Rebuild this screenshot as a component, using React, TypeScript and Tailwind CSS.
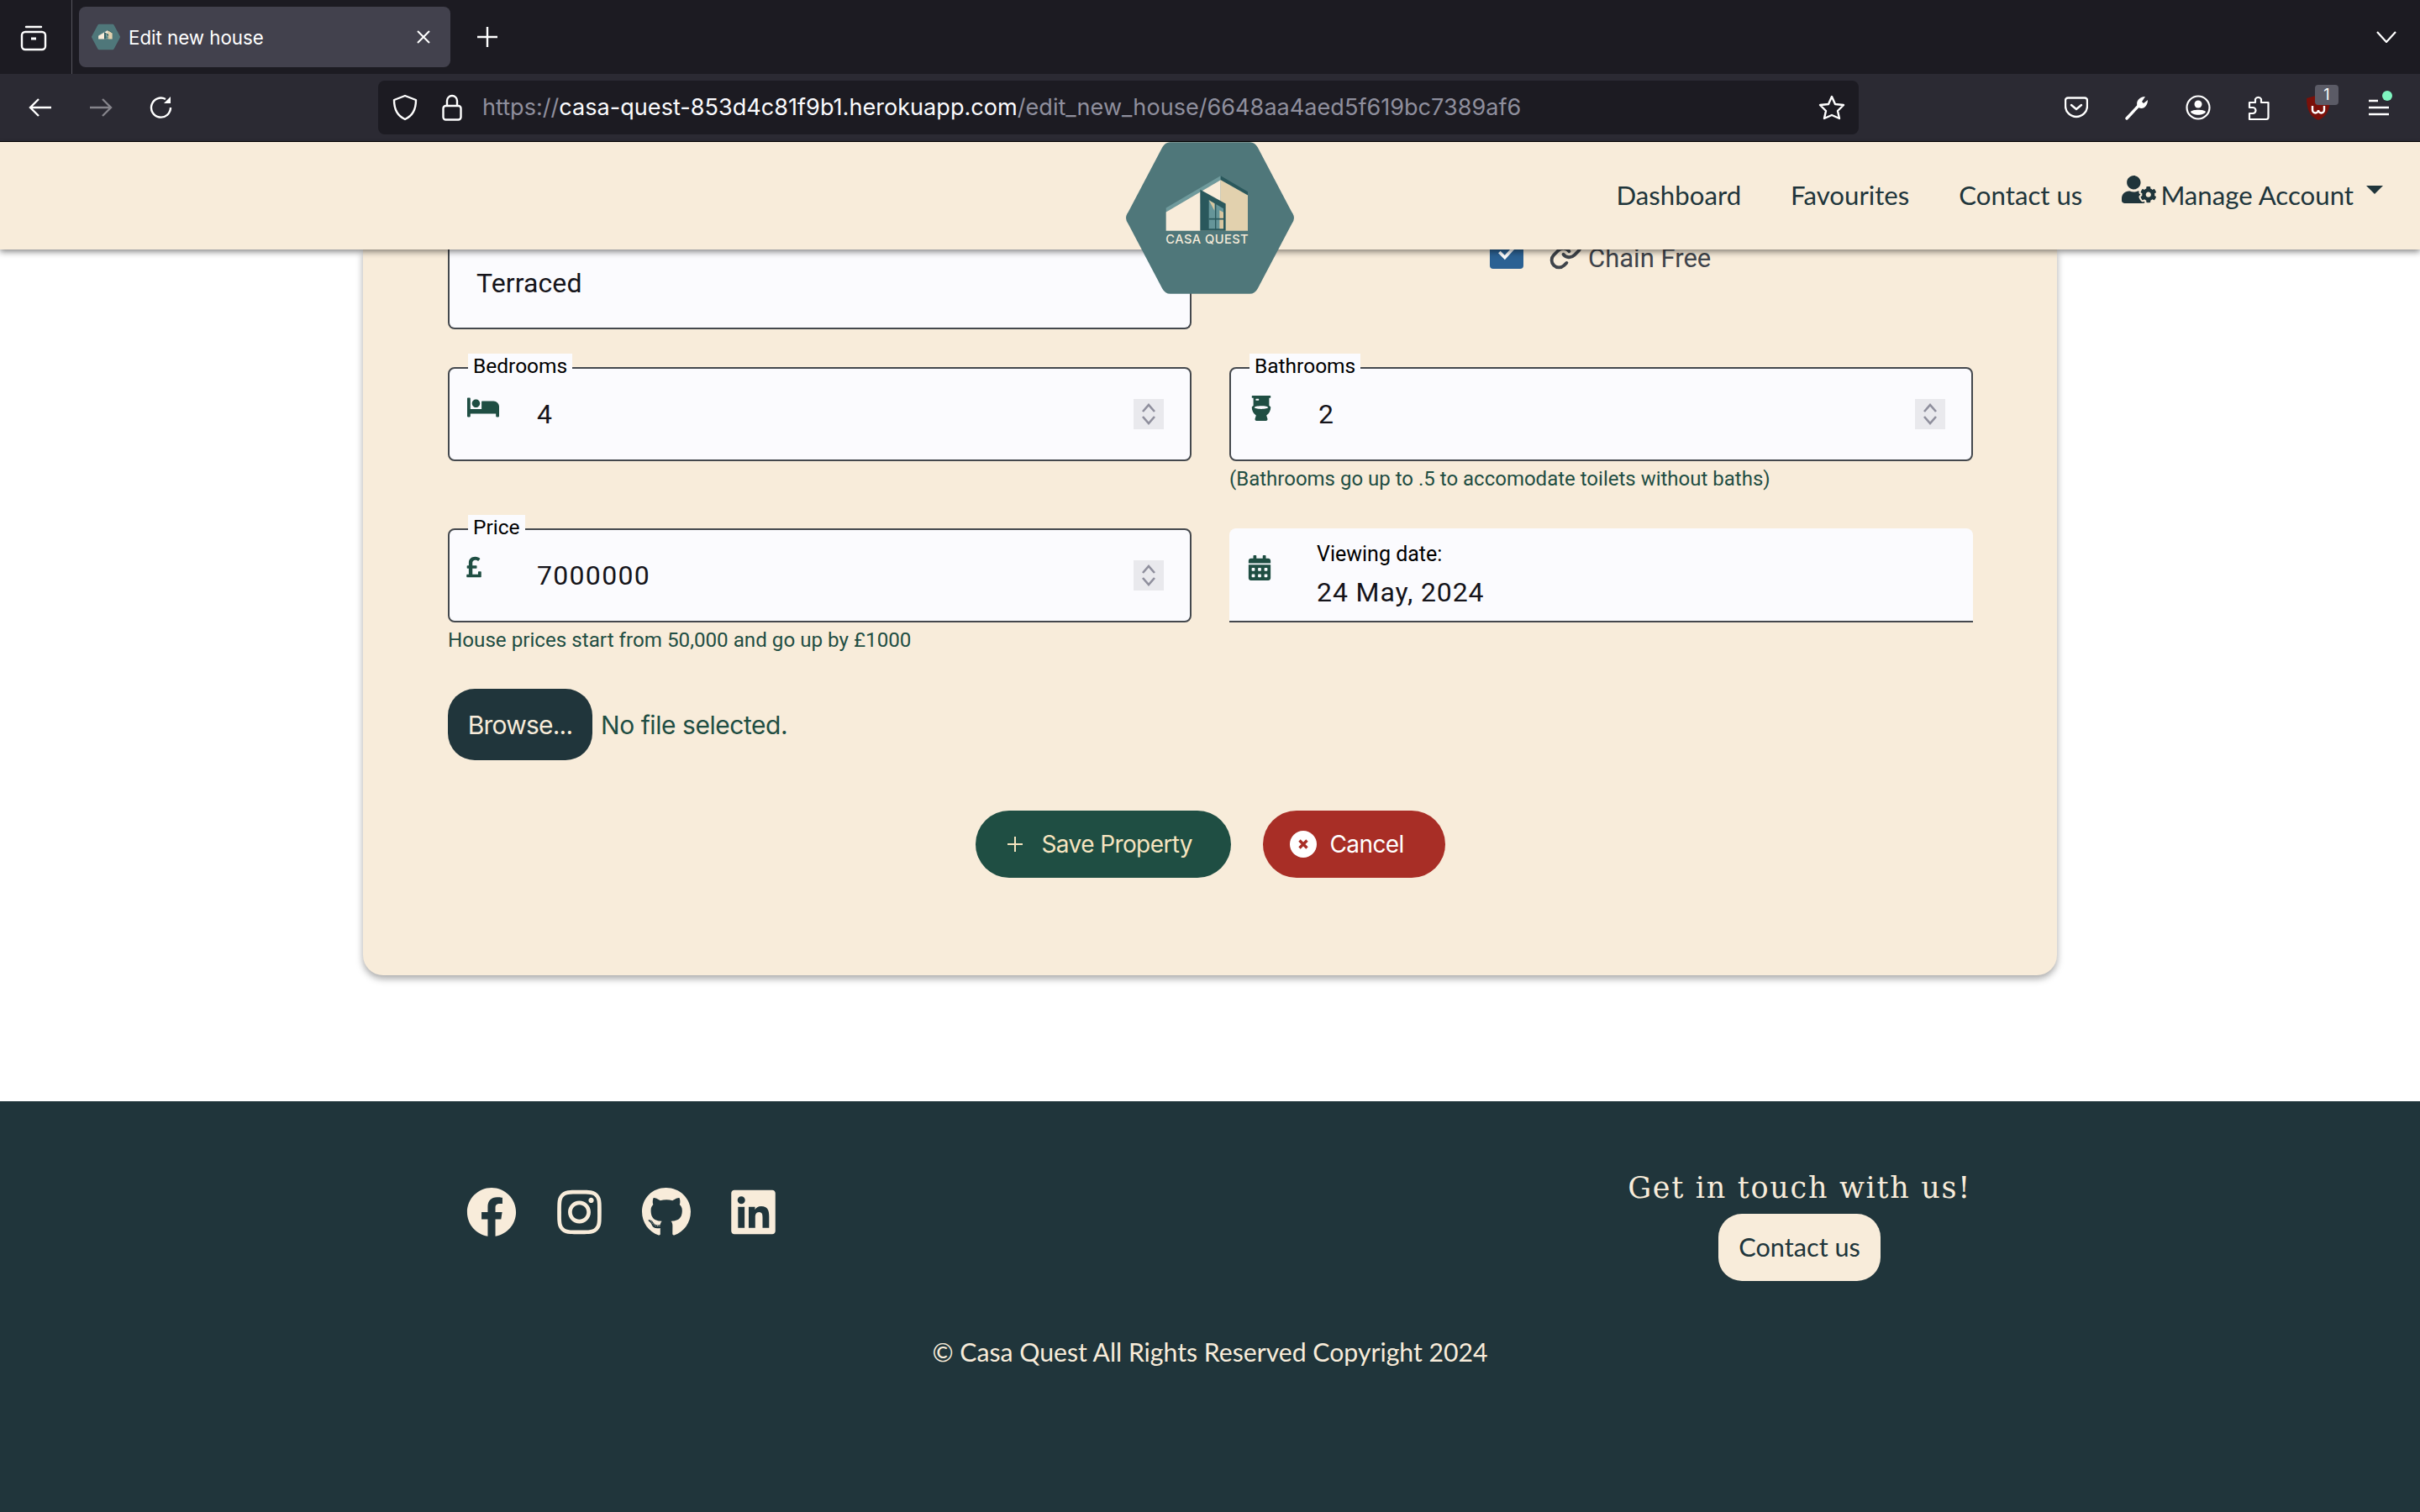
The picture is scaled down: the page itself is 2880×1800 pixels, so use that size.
import { FaBed, FaCalendarAlt, FaFacebook, FaGithub, FaInstagram, FaLinkedin, FaPoundSign, FaToilet, FaUserCog } from "react-icons/fa";
import { Link } from "lucide-react";

function HexLogo({ withText = true, className = "" }: { withText?: boolean; className?: string }) {
    return (
        <svg viewBox="180 55 600 542" className={className}>
            <path d="M338 55 L622 55 Q640 55 650 73 L772 305 Q788 326 772 347 L650 579 Q640 597 622 597 L338 597 Q320 597 310 579 L188 347 Q172 326 188 305 L310 73 Q320 55 338 55 Z" fill="#4f777a" />
            <polygon points="323,290 518,175 518,190 323,305" fill="#6f9a9c" />
            <polygon points="518,175 615,232 615,245 518,190" fill="#2a585c" />
            <polygon points="323,305 518,190 518,372 323,372" fill="#f8ecda" />
            <polygon points="518,190 615,245 615,372 518,372" fill="#e2d1ae" />
            <polygon points="445,225 536,275 536,372 445,372" fill="#2a585c" />
            <polygon points="476,262 528,292 528,364 476,364" fill="#659599" />
            <polygon points="476,262 496,274 496,300" fill="#d9c69f" />
            <polygon points="514,298 528,306 528,364 514,364" fill="#d9c69f" />
            <rect x="498" y="270" width="4" height="100" fill="#2a585c" />
            <rect x="476" y="327" width="54" height="5" fill="#2a585c" />
            {withText && (
                <text x="322" y="418" fontSize="44" fontWeight="500" textLength="295" fill="#f3ead9" fontFamily="Inter, sans-serif">CASA QUEST</text>
            )}
        </svg>
    );
}

function Spinner() {
    return (
        <div className="w-[36px] h-[36px] bg-[#e9e9ed] ml-auto mr-[31px] shrink-0">
            <svg viewBox="0 0 36 36" className="w-full h-full" fill="none" stroke="#8f8f9d" strokeWidth="2.6">
                <path d="M11 15 L18 7 L25 15" />
                <path d="M11 21 L18 29 L25 21" />
            </svg>
        </div>
    );
}

function NumberField({ label, value, icon }: { label: string; value: string; icon: React.ReactNode }) {
    return (
        <div className="relative h-[112px] -mt-[1px] bg-[#fbfbfe] border-2 border-[#44484d] rounded-lg flex items-center">
            <span className="absolute left-[22px] top-[-18px] bg-[#fbfbfe] px-[6px] text-[24.5px] leading-[30px] text-black">{label}</span>
            <div className="w-[104px] h-full pl-[21px] pt-[32px] shrink-0 text-[#1f4e43]">{icon}</div>
            <span className="text-[32px] leading-[40px] tracking-[1.3px] text-[#15141a]">{value}</span>
            <Spinner />
        </div>
    );
}

function TabStrip() {
    return (
        <div className="h-[88px] bg-[#1c1b22] flex items-center font-['Inter',sans-serif]">
            <svg viewBox="0 0 32 32" className="w-[32px] h-[32px] ml-[24px] mt-[2px]" fill="none" stroke="white" strokeWidth="2.4">
                <rect x="2" y="9" width="28" height="21" rx="4" />
                <path d="M7 3 H25" strokeLinecap="round" />
                <path d="M13 17 H19" strokeWidth="3" />
            </svg>
            <div className="w-[1px] h-[88px] bg-[#55545c] ml-[29px]" />
            <div className="w-[442px] h-[72px] bg-[#42414d] rounded-lg ml-[8px] flex items-center">
                <HexLogo withText={false} className="w-[34px] h-[34px] ml-[15px]" />
                <span className="text-white text-[22.3px] ml-[10px] mt-[2px]">Edit new house</span>
                <svg viewBox="0 0 18 18" className="w-[18px] h-[18px] ml-auto mr-[23px]" stroke="white" strokeWidth="2">
                    <path d="M2 2 L16 16 M16 2 L2 16" />
                </svg>
            </div>
            <svg viewBox="0 0 26 26" className="w-[26px] h-[26px] ml-[31px]" stroke="white" strokeWidth="2.4">
                <path d="M13 1 V25 M1 13 H25" />
            </svg>
            <svg viewBox="0 0 24 14" className="w-[24px] h-[14px] ml-auto mr-[28px]" fill="none" stroke="white" strokeWidth="2.2">
                <path d="M1 1 L12 13 L23 1" />
            </svg>
        </div>
    );
}

function Toolbar() {
    return (
        <div className="h-[81px] pb-[1px] bg-[#2b2a33] border-b border-black flex items-center font-['Inter',sans-serif]">
            <svg viewBox="0 0 28 24" className="w-[28px] h-[24px] ml-[34px]" fill="none" stroke="white" strokeWidth="2.4">
                <path d="M27 12 H2 M12 2 L2 12 L12 22" />
            </svg>
            <svg viewBox="0 0 28 24" className="w-[28px] h-[24px] ml-[44px]" fill="none" stroke="#85848b" strokeWidth="2.4">
                <path d="M1 12 H26 M16 2 L26 12 L16 22" />
            </svg>
            <svg viewBox="0 0 28 28" className="w-[28px] h-[28px] ml-[44px]" fill="none" stroke="white" strokeWidth="2.4">
                <path d="M25 14 A11.5 11.5 0 1 1 19 4" />
                <path d="M25 1 V9 H17" fill="white" stroke="none" />
            </svg>
            <div className="w-[1762px] h-[64px] bg-[#1c1b22] rounded-lg ml-[244px] flex items-center">
                <svg viewBox="0 0 30 32" className="w-[30px] h-[32px] ml-[17px]" fill="none" stroke="white" strokeWidth="2.4" strokeLinejoin="round">
                    <path d="M15 2 L28 7 C28 18 24 26 15 30 C6 26 2 18 2 7 Z" />
                </svg>
                <svg viewBox="0 0 24 32" className="w-[24px] h-[32px] ml-[29px]" fill="none" stroke="white" strokeWidth="2.4">
                    <rect x="1.5" y="14" width="21" height="16.5" rx="3" />
                    <path d="M6 14 V8 A6 6 0 0 1 18 8 V14" />
                </svg>
                <span className="ml-[24px] mt-[2px] text-[27.1px] text-[#fbfbfe] whitespace-nowrap">
                    <span className="text-[#8f8f9d]">https://</span>casa-quest-853d4c81f9b1.herokuapp.com<span className="text-[#8f8f9d]">/edit_new_house/6648aa4aed5f619bc7389af6</span>
                </span>
                <svg viewBox="0 0 32 30" className="w-[32px] h-[30px] ml-auto mr-[16px]" fill="none" stroke="white" strokeWidth="2.4" strokeLinejoin="round">
                    <path d="M16 2 L20 11 L30 12 L23 19 L25 28 L16 24 L7 28 L9 19 L2 12 L12 11 Z" />
                </svg>
            </div>
            <svg viewBox="0 0 28 26" className="w-[28px] h-[26px] ml-[245px]" fill="none" stroke="white" strokeWidth="2.4" strokeLinejoin="round">
                <path d="M4 1.5 H24 A3 3 0 0 1 27 4.5 V11 A13 13 0 0 1 1 11 V4.5 A3 3 0 0 1 4 1.5 Z" />
                <path d="M8 10 L14 15 L20 10" strokeLinecap="round" />
            </svg>
            <svg viewBox="0 0 28 30" className="w-[28px] h-[30px] ml-[44px]" fill="none" stroke="white" strokeWidth="3.4" strokeLinecap="round">
                <path d="M2 28 L16 13" />
                <path d="M15 14 C12 8 17 2 24 2 L20 8 L22 10 L27 6 C27 13 22 18 16 15" fill="white" stroke="none" />
            </svg>
            <svg viewBox="0 0 30 30" className="w-[30px] h-[30px] ml-[44px]" fill="none" stroke="white" strokeWidth="2.2">
                <circle cx="15" cy="15" r="13.5" />
                <circle cx="15" cy="11" r="4.5" fill="white" stroke="none" />
                <path d="M6 20 C8 17 22 17 24 20 C22 25 8 25 6 20 Z" fill="white" stroke="none" />
            </svg>
            <svg viewBox="0 0 26 32" className="w-[26px] h-[32px] ml-[44px]" fill="none" stroke="white" strokeWidth="2.2" strokeLinejoin="round">
                <path d="M2 30 H22 A2.5 2.5 0 0 0 24.5 27.5 V10 H16 V6 A4 4 0 0 0 9 6 V10 H2 V16 H6 A3 3 0 0 1 6 23 H2 Z" />
            </svg>
            <div className="relative w-[28px] h-[32px] ml-[44px]">
                <svg viewBox="0 0 28 32" className="w-full h-full">
                    <path d="M14 1 L28 5 C28 18 24 27 14 31 C4 27 0 18 0 5 Z" fill="#7a1009" />
                    <path d="M7 14 V19 A2.5 2.5 0 0 0 14 19 A2.5 2.5 0 0 0 21 19 V14" fill="none" stroke="white" strokeWidth="2.4" />
                </svg>
                <span className="absolute left-[10px] top-[-11px] w-[28px] h-[24px] rounded bg-[#5b5b66] text-white text-[18px] leading-[24px] text-center">1</span>
            </div>
            <div className="relative w-[24px] h-[20px] ml-[46px]">
                <svg viewBox="0 0 24 20" className="w-full h-full" stroke="white" strokeWidth="2.4">
                    <path d="M0 2 H11 M0 10 H24 M0 18 H24" />
                </svg>
                <span className="absolute left-[16px] top-[-10px] w-[12px] h-[12px] rounded-full bg-[#7ff5c0]" />
            </div>
        </div>
    );
}

function SiteHeader() {
    return (
        <header className="relative z-10 h-[128px] bg-[#f8ecda] shadow-[0_3px_7px_rgba(0,0,0,0.45)] pb-[2px] flex items-center justify-end text-[#20353b] text-[31.2px] font-['Lato',sans-serif]">
            <HexLogo className="absolute left-[1340px] top-0 w-[200px] h-[181px]" />
            <a>Dashboard</a>
            <a className="ml-[59px]">Favourites</a>
            <a className="ml-[59px]">Contact us</a>
            <FaUserCog className="text-[41px] ml-[47px] mb-[14px]" />
            <a className="ml-[5px]">Manage Account</a>
            <span className="ml-[15px] mr-[44px] mb-[12px] w-0 h-0 border-x-[10px] border-x-transparent border-t-[10px] border-t-[#20353b]" />
        </header>
    );
}

function EditForm() {
    return (
        <div className="w-[2016px] ml-[432px] bg-[#f8ecda] rounded-b-3xl shadow-[0_4px_8px_rgba(0,0,0,0.35)] pl-[101px] pr-[101px] pb-[116px] font-['Roboto',sans-serif]">
            <div className="grid grid-cols-[885px_885px] gap-x-[45px] grid-rows-[141px_192px_190px]">
                <div className="h-[95px] bg-[#fbfbfe] border-x-2 border-b-2 border-[#44484d] rounded-b-lg pl-[32px] pt-[20px] text-[32px] leading-[40px] tracking-[0.1px] text-[#15141a]">
                    Terraced
                </div>
                <div className="flex items-start pl-[310px] text-[#3f444b]">
                    <div className="w-[40px] h-[40px] mt-[-17px] rounded bg-[#2b6193] flex items-center justify-center shrink-0">
                        <svg viewBox="0 0 24 24" className="w-[26px] h-[26px]" fill="none" stroke="white" strokeWidth="3.4">
                            <path d="M4 12 L10 18 L21 6" />
                        </svg>
                    </div>
                    <Link size={42} strokeWidth={2.2} className="ml-[30px] mt-[-17px] shrink-0" />
                    <span className="ml-[5px] mt-[-9px] text-[31px] leading-[40px]">Chain Free</span>
                </div>
                <NumberField label="Bedrooms" value="4" icon={<FaBed className="text-[38px] -mt-[5px]" />} />
                <div>
                    <NumberField label="Bathrooms" value="2" icon={<FaToilet className="text-[30px]" />} />
                    <p className="text-[24px] leading-[28px] mt-[7px] text-[#1f4e43]">(Bathrooms go up to .5 to accomodate toilets without baths)</p>
                </div>
                <div>
                    <NumberField label="Price" value="7000000" icon={<FaPoundSign className="text-[28px] -ml-[6px] -mt-[2px]" />} />
                    <p className="text-[24.2px] leading-[28px] mt-[7px] text-[#1f4e43]">House prices start from 50,000 and go up by £1000</p>
                </div>
                <div className="h-[112px] -mt-[1px] bg-[#fbfbfe] rounded-t-lg border-b-2 border-[#44484d] flex">
                    <div className="w-[104px] pl-[21px] pt-[32px] text-[#1f4e43] shrink-0">
                        <FaCalendarAlt className="text-[30px]" />
                    </div>
                    <div className="pt-[16px]">
                        <p className="text-[25px] leading-[30px] text-black">Viewing date:</p>
                        <p className="text-[32px] leading-[40px] mt-[10px] tracking-[0.9px] text-[#15141a]">24 May, 2024</p>
                    </div>
                </div>
            </div>
            <div className="flex items-center font-['Inter',sans-serif] text-[30px]">
                <button className="w-[172px] h-[85px] pt-[2px] rounded-[32px] bg-[#20353b] text-[#f8ecda] tracking-[-0.8px]">Browse...</button>
                <span className="ml-[10px] pt-[2px] text-[#1f4e43] tracking-[-0.45px]">No file selected.</span>
            </div>
            <div className="mt-[60px] flex justify-center font-['Inter',sans-serif] text-[28px] tracking-[-0.6px]">
                <button className="w-[304px] h-[80px] rounded-full bg-[#1f4e43] text-[#f6e4bf] flex items-center pl-[38px]">
                    <svg viewBox="0 0 18 18" className="w-[18px] h-[18px]" stroke="#f6e4bf" strokeWidth="2">
                        <path d="M9 0 V18 M0 9 H18" />
                    </svg>
                    <span className="ml-[23px]">Save Property</span>
                </button>
                <button className="w-[217px] h-[80px] ml-[38px] rounded-full bg-[#a82e26] text-white flex items-center pl-[32px]">
                    <svg viewBox="0 0 32 32" className="w-[32px] h-[32px]">
                        <circle cx="16" cy="16" r="16" fill="white" />
                        <path d="M11.5 11.5 L20.5 20.5 M20.5 11.5 L11.5 20.5" stroke="#a82e26" strokeWidth="3.4" />
                    </svg>
                    <span className="ml-[16px]">Cancel</span>
                </button>
            </div>
        </div>
    );
}

function SiteFooter() {
    return (
        <footer className="mt-[150px] h-[489px] bg-[#20353b] pt-[81px] text-[#f8ecda]">
            <div className="flex justify-between pl-[555px] pr-[534px] h-[134px]">
                <div className="flex items-start gap-[48px] pt-[21px] text-[60px]">
                    <FaFacebook />
                    <FaInstagram className="w-[53px]" />
                    <FaGithub className="w-[58px]" />
                    <FaLinkedin className="w-[53px]" />
                </div>
                <div className="flex flex-col items-center">
                    <h3 className="font-['DejaVu_Serif',serif] text-[35px] leading-[44px] tracking-[1.7px]">Get in touch with us!</h3>
                    <button className="mt-[9px] w-[193px] h-[80px] rounded-[28px] bg-[#f8ecda] text-[#20353b] text-[30.7px] font-['Lato',sans-serif]">Contact us</button>
                </div>
            </div>
            <p className="mt-[63px] text-center text-[30.2px] leading-[40px] font-['Lato',sans-serif]">© Casa Quest All Rights Reserved Copyright 2024</p>
        </footer>
    );
}

export default function App() {
    return (
        <div className="w-[2880px] h-[1800px] overflow-hidden bg-white">
            <TabStrip />
            <Toolbar />
            <SiteHeader />
            <EditForm />
            <SiteFooter />
        </div>
    );
}
